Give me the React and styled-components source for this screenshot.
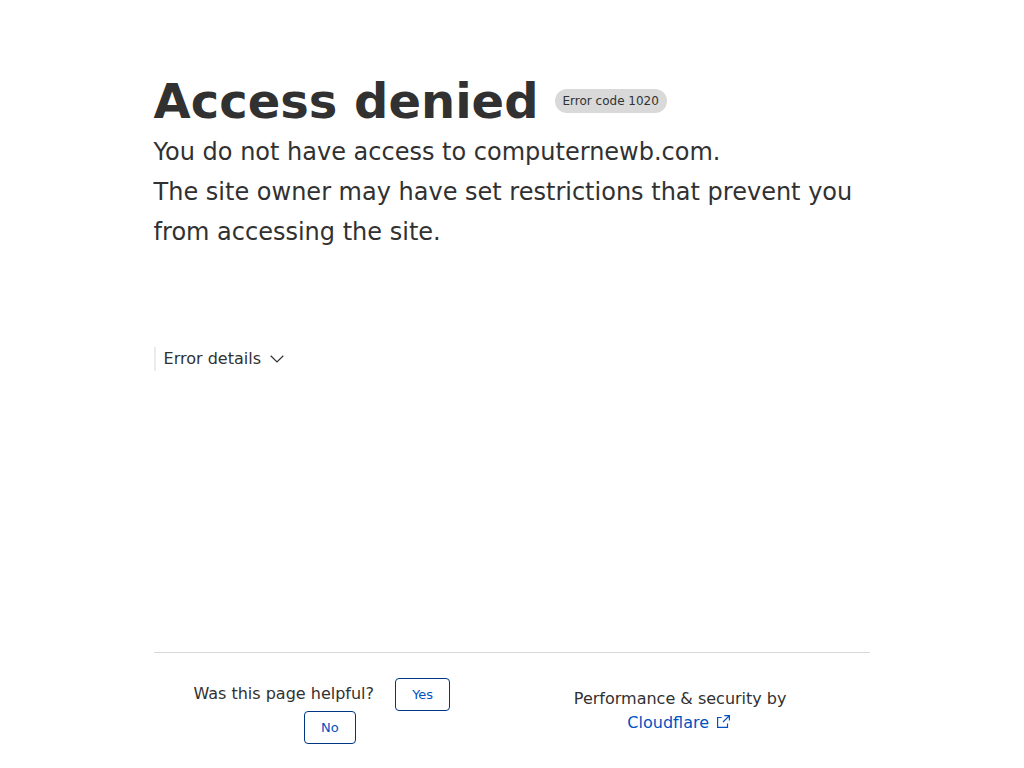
import React, { useState } from 'react';
import styled, { createGlobalStyle } from 'styled-components';

const GlobalStyle = createGlobalStyle`
  * {
    box-sizing: border-box;
    margin: 0;
    padding: 0;
  }

  body {
    background: #fff;
    color: #313131;
    font: 16px/24px "DejaVu Sans", Verdana, sans-serif;
  }
`;

const Page = styled.div`
  display: flex;
  flex-direction: column;
  width: 70%;
  min-height: 100vh;
  margin: 0 auto;
  padding-top: 71px;
`;

const TitleRow = styled.div`
  display: flex;
  flex-wrap: wrap;
  align-items: center;
  gap: 16px;
`;

const Title = styled.h1`
  font-size: 48px;
  line-height: 60px;
`;

const ErrorCode = styled.span`
  padding: 0 8px;
  border-radius: 12px;
  background: #d9d9d9;
  font-size: 12px;
  line-height: 24px;
`;

const Messages = styled.div`
  padding-top: 1px;
`;

const Message = styled.p`
  font-size: 24px;
  line-height: 40px;
`;

const Details = styled.section`
  flex: 1;
  margin-top: 95px;
`;

const DetailsToggle = styled.button`
  display: flex;
  align-items: center;
  gap: 9px;
  padding-left: 8px;
  border: 0;
  border-left: 2px solid #ebebeb;
  background: none;
  color: inherit;
  font: inherit;
  cursor: pointer;
`;

const DetailsText = styled.p`
  padding: 8px 10px;
`;

const Footer = styled.footer`
  display: grid;
  grid-template-columns: 1fr 1fr;
  padding: 25px 0 24px;
  border-top: 1px solid #d9d9d9;
`;

const Feedback = styled.div`
  padding: 0 54px 0 32px;
  text-align: center;
`;

const FeedbackButton = styled.button`
  margin-left: 16px;
  padding: 0 16px;
  border: 1px solid #003681;
  border-radius: 4px;
  background: #fff;
  color: #0051c3;
  font: 13px/31px "DejaVu Sans", Verdana, sans-serif;
  cursor: pointer;
`;

const Attribution = styled.div`
  padding: 9px 70px 0 48px;
  text-align: center;
`;

const ExternalLink = styled.a`
  color: #0051c3;
  text-decoration: none;

  svg {
    margin-left: 8px;
  }
`;

const ChevronIcon = () => (
  <svg width="14" height="8" viewBox="0 0 14 8" fill="none" stroke="currentColor" aria-hidden="true">
    <path d="M.7 .8 7 7 13.3 .8" strokeWidth="1.2" />
  </svg>
);

const ExternalIcon = () => (
  <svg width="16" height="13" viewBox="0 0 16 13" fill="none" stroke="currentColor" aria-hidden="true">
    <path d="M4.6 2.5H.6v9.9h9.9V8.4M7.4 .6h5V5.6M12.2 .8 6 7" strokeWidth="1.2" />
  </svg>
);

const App = () => {
  const [open, setOpen] = useState(false);
  const [answered, setAnswered] = useState(false);

  return (
    <React.Fragment>
      <GlobalStyle />
      <Page>
        <header>
          <TitleRow>
            <Title>Access denied</Title>
            <ErrorCode>Error code 1020</ErrorCode>
          </TitleRow>
          <Messages>
            <Message>You do not have access to computernewb.com.</Message>
            <Message>The site owner may have set restrictions that prevent you from accessing the site.</Message>
          </Messages>
        </header>
        <Details>
          <DetailsToggle type="button" aria-expanded={open} onClick={() => setOpen(!open)}>
            Error details
            <ChevronIcon />
          </DetailsToggle>
          {open && <DetailsText>Error code 1020</DetailsText>}
        </Details>
        <Footer>
          {answered && <Feedback>Thank you for your feedback!</Feedback>}
          {!answered && (
            <Feedback>
              Was this page helpful?{' '}
              <FeedbackButton type="button" onClick={() => setAnswered(true)}>Yes</FeedbackButton>
              {' '}
              <FeedbackButton type="button" onClick={() => setAnswered(true)}>No</FeedbackButton>
            </Feedback>
          )}
          <Attribution>
            Performance &amp; security by{' '}
            <ExternalLink href="https://www.cloudflare.com">
              Cloudflare
              <ExternalIcon />
            </ExternalLink>
          </Attribution>
        </Footer>
      </Page>
    </React.Fragment>
  );
};

export default App;
